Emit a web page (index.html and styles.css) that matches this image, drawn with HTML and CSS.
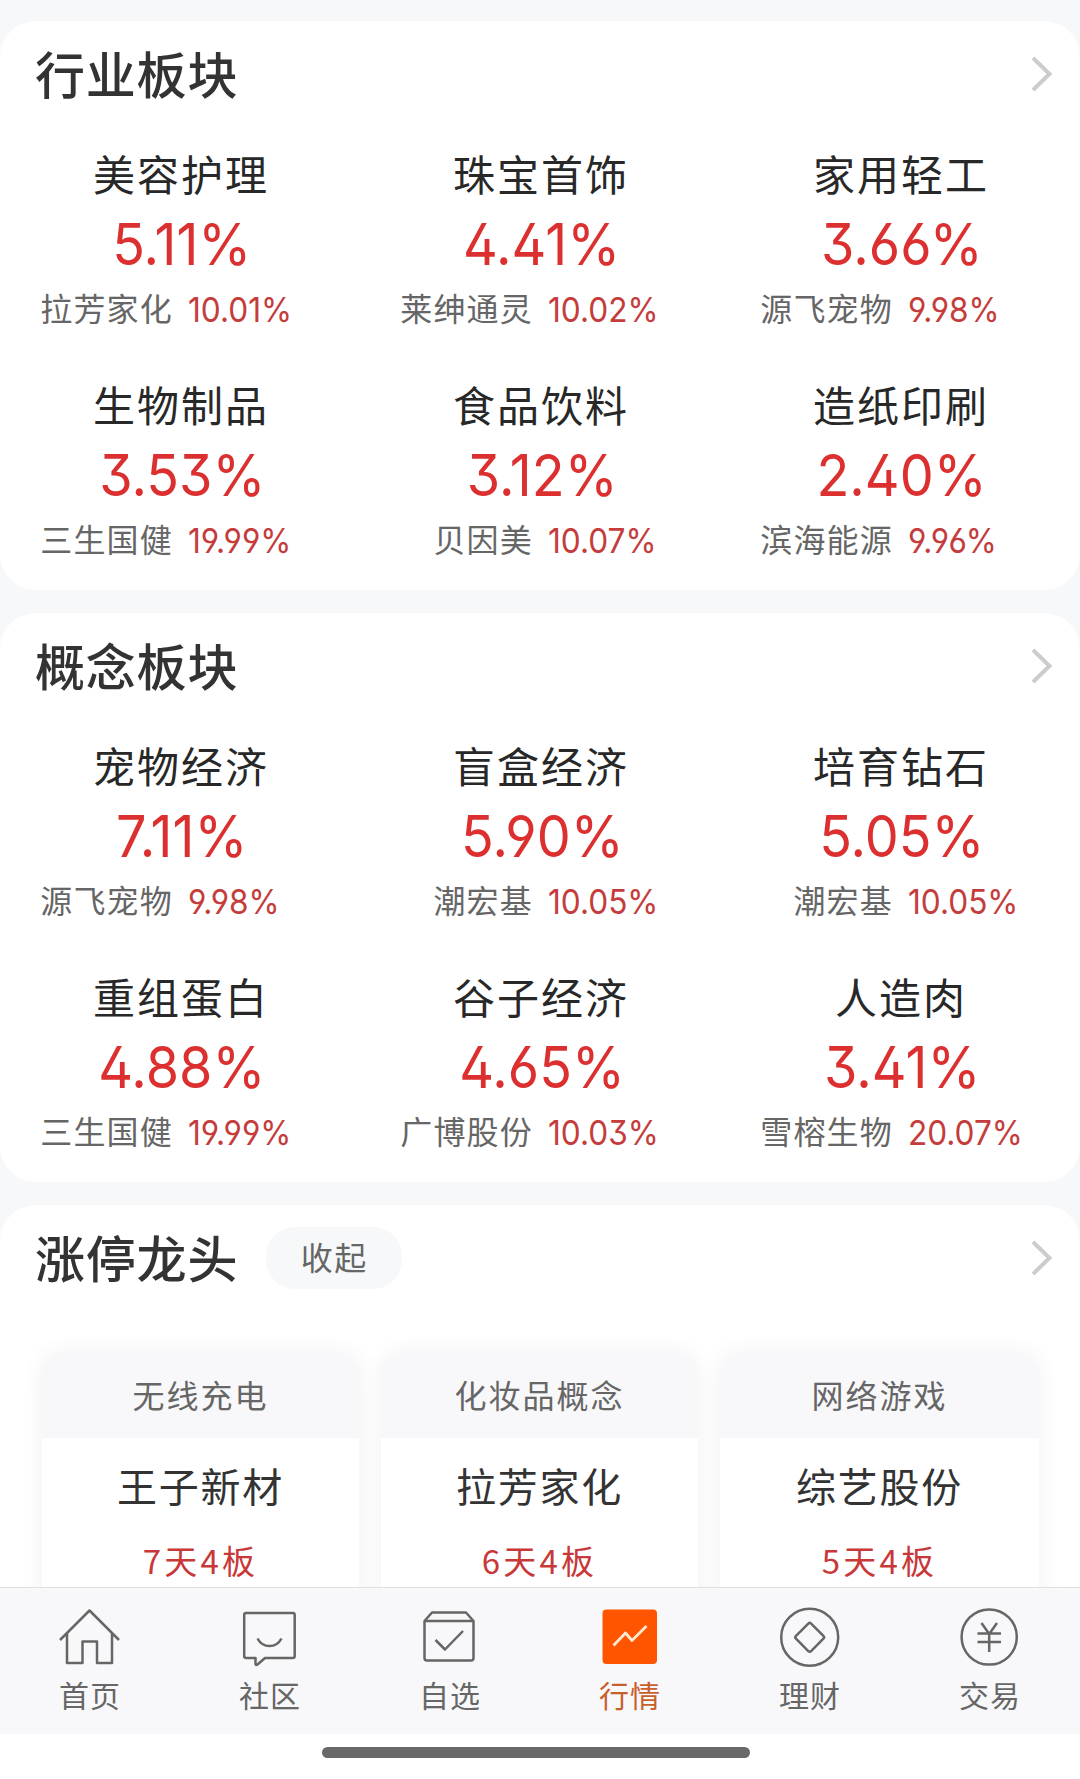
FILE: index.html
```
<!DOCTYPE html>
<html lang="zh-CN">
<head>
    <meta charset="UTF-8">
    <meta name="viewport" content="width=device-width, initial-scale=1.0">
    <title>行情</title>
    <link rel="stylesheet" href="styles.css">
</head>
<body>
    <main class="content">
        <section class="card">
            <div class="card-header">
                <h2 class="title">行业板块</h2>
                <svg class="chevron" width="22" height="36" viewBox="0 0 22 36"><path d="M2 2L18.500 18L2 34"/></svg>
            </div>
            <div class="grid">
                <div class="cell">
                    <div class="name">美容护理</div>
                    <div class="percent"><span>5.11%</span></div>
                    <div class="leader"><span class="stock">拉芳家化</span><span class="rate">10.01%</span></div>
                </div>
                <div class="cell">
                    <div class="name">珠宝首饰</div>
                    <div class="percent"><span>4.41%</span></div>
                    <div class="leader"><span class="stock">莱绅通灵</span><span class="rate">10.02%</span></div>
                </div>
                <div class="cell">
                    <div class="name">家用轻工</div>
                    <div class="percent"><span>3.66%</span></div>
                    <div class="leader"><span class="stock">源飞宠物</span><span class="rate">9.98%</span></div>
                </div>
                <div class="cell">
                    <div class="name">生物制品</div>
                    <div class="percent"><span>3.53%</span></div>
                    <div class="leader"><span class="stock">三生国健</span><span class="rate">19.99%</span></div>
                </div>
                <div class="cell">
                    <div class="name">食品饮料</div>
                    <div class="percent"><span>3.12%</span></div>
                    <div class="leader"><span class="stock">贝因美</span><span class="rate">10.07%</span></div>
                </div>
                <div class="cell">
                    <div class="name">造纸印刷</div>
                    <div class="percent"><span>2.40%</span></div>
                    <div class="leader"><span class="stock">滨海能源</span><span class="rate">9.96%</span></div>
                </div>
            </div>
        </section>

        <section class="card">
            <div class="card-header">
                <h2 class="title">概念板块</h2>
                <svg class="chevron" width="22" height="36" viewBox="0 0 22 36"><path d="M2 2L18.500 18L2 34"/></svg>
            </div>
            <div class="grid">
                <div class="cell">
                    <div class="name">宠物经济</div>
                    <div class="percent"><span>7.11%</span></div>
                    <div class="leader"><span class="stock">源飞宠物</span><span class="rate">9.98%</span></div>
                </div>
                <div class="cell">
                    <div class="name">盲盒经济</div>
                    <div class="percent"><span>5.90%</span></div>
                    <div class="leader"><span class="stock">潮宏基</span><span class="rate">10.05%</span></div>
                </div>
                <div class="cell">
                    <div class="name">培育钻石</div>
                    <div class="percent"><span>5.05%</span></div>
                    <div class="leader"><span class="stock">潮宏基</span><span class="rate">10.05%</span></div>
                </div>
                <div class="cell">
                    <div class="name">重组蛋白</div>
                    <div class="percent"><span>4.88%</span></div>
                    <div class="leader"><span class="stock">三生国健</span><span class="rate">19.99%</span></div>
                </div>
                <div class="cell">
                    <div class="name">谷子经济</div>
                    <div class="percent"><span>4.65%</span></div>
                    <div class="leader"><span class="stock">广博股份</span><span class="rate">10.03%</span></div>
                </div>
                <div class="cell">
                    <div class="name">人造肉</div>
                    <div class="percent"><span>3.41%</span></div>
                    <div class="leader"><span class="stock">雪榕生物</span><span class="rate">20.07%</span></div>
                </div>
            </div>
        </section>

        <section class="card">
            <div class="card-header">
                <h2 class="title">涨停龙头</h2>
                <button class="toggle">收起</button>
                <svg class="chevron" width="22" height="36" viewBox="0 0 22 36"><path d="M2 2L18.500 18L2 34"/></svg>
            </div>
            <div class="boards">
                <div class="board">
                    <div class="board-head">无线充电</div>
                    <div class="board-stock">王子新材</div>
                    <div class="board-days">7天4板</div>
                </div>
                <div class="board">
                    <div class="board-head">化妆品概念</div>
                    <div class="board-stock">拉芳家化</div>
                    <div class="board-days">6天4板</div>
                </div>
                <div class="board">
                    <div class="board-head">网络游戏</div>
                    <div class="board-stock">综艺股份</div>
                    <div class="board-days">5天4板</div>
                </div>
            </div>
        </section>
    </main>

    <nav class="tabbar">
        <a class="tab">
            <svg class="icon" width="64" height="64" viewBox="0 0 64 64">
                <path d="M2 35L31.500 5.500L61 35M9 28V58H24.500V36.500H39V58H54V28"/>
            </svg>
            <span>首页</span>
        </a>
        <a class="tab">
            <svg class="icon" width="64" height="64" viewBox="0 0 64 64">
                <path d="M8.200 8H54.700Q56.700 8 56.700 10V51Q56.700 53 54.700 53H27L19.500 59.500Q17.500 61 17.500 58.500V53H8.200Q6.200 53 6.200 51V10Q6.200 8 8.200 8Z"/>
                <path d="M19.500 33.500Q23.500 41 31.500 41T43.500 33.500"/>
            </svg>
            <span>社区</span>
        </a>
        <a class="tab">
            <svg class="icon" width="64" height="64" viewBox="0 0 64 64">
                <path d="M6.500 16L14 7.500H48L55.500 16V53Q55.500 55.500 53 55.500H9Q6.500 55.500 6.500 53ZM6.500 16H55.500M17.500 35L27 44.500L45 26"/>
            </svg>
            <span>自选</span>
        </a>
        <a class="tab active">
            <svg class="icon" width="64" height="64" viewBox="0 0 64 64">
                <rect class="fill" x="4.500" y="4.500" width="54.500" height="54.500" rx="4"/>
                <path class="trend" d="M15.500 40.500L27.500 28L34 35.500L48.500 21"/>
            </svg>
            <span>行情</span>
        </a>
        <a class="tab">
            <svg class="icon" width="64" height="64" viewBox="0 0 64 64">
                <circle cx="31.700" cy="32.300" r="28.500"/>
                <rect x="21" y="21.600" width="21.400" height="21.400" rx="2" transform="rotate(45 31.700 32.300)"/>
            </svg>
            <span>理财</span>
        </a>
        <a class="tab">
            <svg class="icon" width="64" height="64" viewBox="0 0 64 64">
                <circle cx="31.200" cy="32" r="27.600"/>
                <path d="M23.500 18L31.200 29L39 18M31.200 29V47M19.500 28.500H43M19.500 37H43"/>
            </svg>
            <span>交易</span>
        </a>
    </nav>
    <footer class="gesture"><div class="handle"></div></footer>
</body>
</html>
```
FILE: styles.css
```
* {
    box-sizing: border-box;
}

body {
    display: flex;
    flex-direction: column;
    width: 1080px;
    height: 1779px;
    margin: 0;
    overflow: hidden;
    background-color: #f6f8fa;
    font-family: "Noto Sans CJK SC", sans-serif;
    color: #282828;
}

.content {
    display: flex;
    flex-direction: column;
    gap: 23px;
    height: 1587px;
    padding-top: 21px;
    overflow: hidden;
}

.card {
    flex: none;
    height: 569px;
    background-color: #fff;
    border-radius: 36px;
}

.card-header {
    display: flex;
    align-items: center;
    height: 106px;
    padding: 0 27px 0 35px;
}

.title {
    margin: 0;
    padding-bottom: 4px;
    font-size: 50px;
    font-weight: 500;
    line-height: 60px;
    letter-spacing: 0.8px;
    color: #333;
}

.chevron {
    margin-left: auto;
    fill: none;
    stroke: #ccc;
    stroke-width: 4;
}

.grid {
    display: grid;
    grid-template-columns: repeat(3, 360px);
    row-gap: 42px;
    padding-top: 16px;
}

.name {
    padding-left: 2px;
    text-align: center;
    font-size: 42px;
    line-height: 60px;
    letter-spacing: 2px;
}

.percent {
    margin-top: 6px;
    padding-left: 4px;
    text-align: center;
    font-family: Inter, sans-serif;
    font-feature-settings: "cv02", "cv03", "cv04", "cv09";
    font-size: 58px;
    line-height: 70px;
    color: #dc3030;
}

.percent span {
    display: inline-block;
    transform: scaleX(0.93);
}

.leader {
    display: flex;
    margin-top: 6px;
    line-height: 44px;
}

.stock {
    width: 173px;
    text-align: right;
    font-size: 32px;
    letter-spacing: 1.2px;
    color: #666;
}

.rate {
    margin-top: 3px;
    padding-left: 16px;
    font-family: Inter, sans-serif;
    font-feature-settings: "cv02", "cv03", "cv04", "cv09";
    font-size: 34px;
    color: #c43c3c;
    transform: scaleX(0.93);
    transform-origin: left;
}

.toggle {
    width: 136px;
    height: 62px;
    margin-left: 28px;
    padding: 0 0 4px;
    border: none;
    border-radius: 29px;
    background-color: #f6f8fa;
    font-family: inherit;
    font-size: 32px;
    letter-spacing: 1.5px;
    color: #666;
}

.boards {
    display: grid;
    grid-template-columns: 317px 317px 319px;
    gap: 22px;
    padding: 42px 42px 0;
}

.board {
    height: 300px;
    background-color: #fff;
    border-radius: 20px 20px 0 0;
    box-shadow: 0 0 24px rgba(0, 0, 0, 0.06);
    text-align: center;
}

.board-head {
    height: 85px;
    border-radius: 20px 20px 0 0;
    background-color: #f8f8fa;
    font-size: 32px;
    line-height: 83px;
    letter-spacing: 2px;
    color: #666;
}

.board-stock {
    padding-top: 19px;
    font-size: 40px;
    line-height: 56px;
    letter-spacing: 1.8px;
    color: #333;
}

.board-days {
    margin-top: 25px;
    font-size: 33px;
    line-height: 44px;
    letter-spacing: 3.2px;
    color: #c83838;
}

.tabbar {
    display: flex;
    height: 147px;
    border-top: 1px solid #dfe0e2;
    background-color: #f8f8fa;
}

.tab {
    display: flex;
    flex-direction: column;
    align-items: center;
    width: 180px;
    padding-top: 17px;
    font-size: 30px;
    line-height: 44px;
    letter-spacing: 1px;
    color: #666;
}

.tab span {
    margin-top: 3px;
}

.icon {
    fill: none;
    stroke: #666;
    stroke-width: 2.5;
    stroke-linejoin: round;
}

.active {
    color: #c8602c;
}

.icon .fill {
    fill: #ff5500;
    stroke: none;
}

.icon .trend {
    stroke: #ffe8d0;
    stroke-width: 2.8;
}

.gesture {
    display: flex;
    justify-content: center;
    height: 45px;
    padding-top: 13px;
    padding-right: 8px;
    background-color: #fff;
}

.handle {
    width: 428px;
    height: 11px;
    border-radius: 6px;
    background-color: #696969;
}
```
